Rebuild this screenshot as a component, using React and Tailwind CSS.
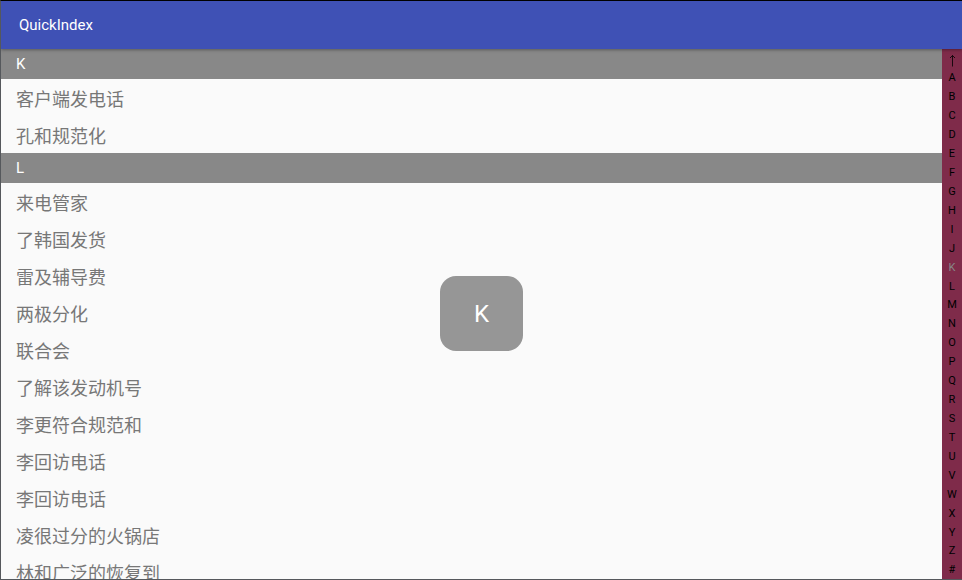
import { useState } from "react";

const SECTIONS = [
  { letter: "K", names: ["客户端发电话", "孔和规范化"] },
  {
    letter: "L",
    names: [
      "来电管家",
      "了韩国发货",
      "雷及辅导费",
      "两极分化",
      "联合会",
      "了解该发动机号",
      "李更符合规范和",
      "李回访电话",
      "李回访电话",
      "凌很过分的火锅店",
      "林和广泛的恢复到",
    ],
  },
];

const INDEX = ["↑", ..."ABCDEFGHIJKLMNOPQRSTUVWXYZ", "#"];

function ArrowUp() {
  return (
    <svg width="7" height="16" viewBox="0 0 7 16" fill="none" stroke="currentColor" strokeWidth="0.8" aria-hidden="true">
      <path d="M3.5 15.5V4.5M1 7L3.5 4.5L6 7" />
    </svg>
  );
}

function Section({ letter, names }) {
  return (
    <section>
      <h2 className="flex h-[30px] items-center bg-[#888888] px-[15px] text-[15px] text-white">{letter}</h2>
      <ul>
        {names.map((name, i) => (
          <li key={i} className="flex h-[37px] items-center px-[15px] pt-1 text-lg text-[#777777]">
            {name}
          </li>
        ))}
      </ul>
    </section>
  );
}

function IndexBar({ selected, onSelect }) {
  return (
    <nav aria-label="Index" className="flex w-5 shrink-0 flex-col bg-[#7f2b4a]">
      {INDEX.map((key) => (
        <button
          key={key}
          type="button"
          aria-label={key === "↑" ? "Top" : undefined}
          onClick={() => onSelect(key)}
          className={`flex min-h-0 flex-1 items-center justify-center pt-px text-[11px] leading-none ${
            key === selected ? "text-[#888888]" : "text-black"
          }`}
        >
          {key === "↑" ? <ArrowUp /> : key}
        </button>
      ))}
    </nav>
  );
}

export default function App() {
  const [selected, setSelected] = useState("K");

  return (
    <div className="flex h-screen flex-col overflow-hidden border-y border-l border-t-black border-b-[#55585c] border-l-[#55585c] bg-[#fafafa] font-[Roboto,'Noto_Sans_CJK_SC',sans-serif]">
      <header className="z-10 flex h-12 shrink-0 items-center bg-[#3f51b5] px-[18px] shadow-[0_1px_3px_rgba(0,0,0,0.35)]">
        <h1 className="text-[15px] text-white">QuickIndex</h1>
      </header>
      <div className="relative flex min-h-0 flex-1">
        <main className="min-w-0 flex-1 overflow-hidden">
          {SECTIONS.map((section) => (
            <Section key={section.letter} {...section} />
          ))}
        </main>
        <IndexBar selected={selected} onSelect={setSelected} />
        <div className="pointer-events-none absolute inset-0 flex items-center justify-center pb-0.5">
          <div className="flex h-[75px] w-[83px] items-center justify-center rounded-2xl bg-[#969696] pt-0.5 text-2xl text-white">
            {selected}
          </div>
        </div>
      </div>
    </div>
  );
}
